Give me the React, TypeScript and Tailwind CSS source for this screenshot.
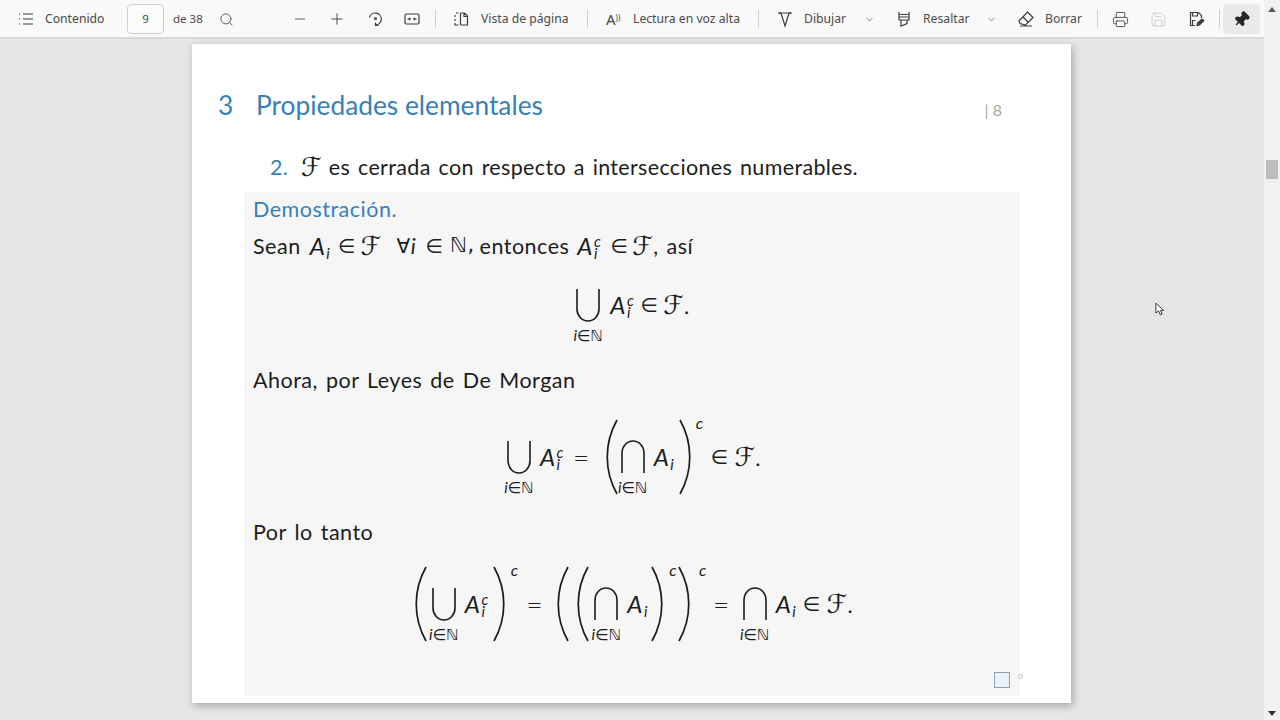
import { ChevronDown, Minus, Plus, Search, Printer, Save, Pin } from "lucide-react";
import type { ReactNode } from "react";

const mathFont = "font-['DejaVu_Sans',sans-serif]";

function Sep({ ml }: { ml: string }) {
  return <div className={`h-[18px] w-px bg-[#cfcfcf] shrink-0 ${ml}`} />;
}

function Glyph({ children, className = "" }: { children: ReactNode; className?: string }) {
  return (
    <svg viewBox="0 0 20 20" fill="none" stroke="#3d3d3d" strokeWidth="1.2" className={`w-5 h-5 shrink-0 ${className}`}>
      {children}
    </svg>
  );
}

function Toolbar() {
  return (
    <div className="h-[39px] shrink-0 flex items-center pt-px bg-[#f9f9f9] border-b-2 border-[#d8d8d8] text-[12.2px] text-[#4a4a4a] font-['Noto_Sans',sans-serif] whitespace-nowrap">
      <Glyph className="ml-[16px]">
        <path d="M3 5h1M3 10h1M3 15h1M7 5h10M7 10h10M7 15h10" />
      </Glyph>
      <span className="ml-[9px] w-[60px]">Contenido</span>
      <div className="ml-[22px] w-[37px] h-[30px] flex items-center justify-center bg-[#fbfbfb] border border-[#cfcfcf] rounded-sm text-[11.5px]">9</div>
      <span className="ml-[9px] w-[29px] text-[11.5px]">de 38</span>
      <Search size={15} strokeWidth={1.4} className="ml-[17px] shrink-0" />
      <Minus size={16} strokeWidth={1.3} className="ml-[58px] shrink-0" />
      <Plus size={18} strokeWidth={1.3} className="ml-[20px] shrink-0" />
      <Glyph className="ml-[19px]">
        <path d="M4.5 8.5a6 6 0 1 1 6 7.5M10.5 13.5v3h3" />
        <circle cx="10.5" cy="9.5" r="1" />
      </Glyph>
      <Glyph className="ml-[17px]">
        <rect x="3" y="5" width="14" height="10" rx="1.5" />
        <path d="M5.5 10h2M12.5 10h2M7 8.8 8.2 10 7 11.2M13 8.8 11.8 10l1.2 1.2" />
      </Glyph>
      <Sep ml="ml-[13px]" />
      <Glyph className="ml-[15px]">
        <path d="M7.5 4H5M4 6v2M4 10v2M4 14v2h3.5M9.500 4v12M9.500 4h4l3 3v9h-7M13 4v3.500h3.500" />
      </Glyph>
      <span className="ml-[10px] w-[90px]">Vista de página</span>
      <Sep ml="ml-[16px]" />
      <span className="ml-[18px] w-[20px] text-[15px] leading-none">A<sup className="text-[8px]">))</sup></span>
      <span className="ml-[7px] w-[109px]">Lectura en voz alta</span>
      <Sep ml="ml-[16px]" />
      <Glyph className="ml-[16px]">
        <path d="M3 4h14M6 4l4 13 4-13M5 3v2M15 3v2" />
      </Glyph>
      <span className="ml-[9px] w-[42px]">Dibujar</span>
      <ChevronDown size={11} strokeWidth={1.4} className="ml-[18px] shrink-0" />
      <Glyph className="ml-[19px]">
        <path d="M5 3v5h10V3M5 8v3h10V8M7 11v6l6-2.500V11M5 5.500h10" />
      </Glyph>
      <span className="ml-[9px] w-[46px]">Resaltar</span>
      <ChevronDown size={11} strokeWidth={1.4} className="ml-[17px] shrink-0" />
      <Glyph className="ml-[19px]">
        <path d="M11.500 3 17 8.500 9.500 16 4 14.500 3 12ZM7 8l5.500 5.500M4 17h12" />
      </Glyph>
      <span className="ml-[9px] w-[37px]">Borrar</span>
      <Sep ml="ml-[15px]" />
      <Printer size={17} strokeWidth={1.3} className="ml-[14px] shrink-0" />
      <Save size={17} strokeWidth={1.2} className="ml-[21px] shrink-0 text-[#c4c4c4]" />
      <Glyph className="ml-[19px]">
        <path d="M9 16.500H4.500v-13h8l3 3V9M6.500 3.500V7h5V3.500M6.500 16v-4.500h3" />
        <path d="m11 16.500.5-2.500 4.500-4 1.800 1.800-4.300 4.200Z" fill="#3d3d3d" />
      </Glyph>
      <Sep ml="ml-[13px]" />
      <div className="ml-[3px] w-[37px] h-[30px] bg-[#e9e9e9] rounded-sm flex items-center justify-center">
        <Pin size={17} className="rotate-45 fill-[#262626] text-[#262626]" />
      </div>
    </div>
  );
}

function Scrollbar() {
  return (
    <div className="w-4 shrink-0 h-full bg-[#f1f1f1] flex flex-col items-center">
      <div className="mt-[7px] w-0 h-0 border-x-[4px] border-x-transparent border-b-[5px] border-b-[#555]" />
      <div className="mt-[148px] w-3 h-[19px] bg-[#bcbcbc]" />
      <div className="mt-auto mb-[4px] w-0 h-0 border-x-[4px] border-x-transparent border-t-[5px] border-t-[#333]" />
    </div>
  );
}

function F({ className = "" }: { className?: string }) {
  return <span className={`${mathFont} italic text-[26px] leading-none ${className}`}>ℱ</span>;
}

function In({ className = "" }: { className?: string }) {
  return <span className={`${mathFont} text-[20px] ${className}`}>∈</span>;
}

function Eq({ className = "" }: { className?: string }) {
  return <span className={`font-light text-[28px] leading-none ${className}`}>=</span>;
}

// A with the sub index and an optional c stacked next to it
function Ai({ c, className = "" }: { c?: boolean; className?: string }) {
  return (
    <span className={`inline-flex items-center italic text-[24px] leading-none ${className}`}>
      <span>A</span>
      <span className="flex flex-col items-start text-[15px] leading-[12px] ml-px mt-[2px]">
        <span className={c ? "" : "invisible"}>c</span>
        <span>i</span>
      </span>
    </span>
  );
}

function BigOp({ kind, className = "" }: { kind: "u" | "n"; className?: string }) {
  return (
    <div className={`h-[76px] w-[28px] flex flex-col items-center shrink-0 ${className}`}>
      <div className="h-[21px]" />
      <svg viewBox="0 0 26 34" fill="none" stroke="#1c1c1c" strokeWidth="1.6" className="w-[26px] h-[34px]">
        {kind === "u" ? <path d="M2 1v20a11 12 0 0 0 22 0V1" /> : <path d="M2 33V13a11 12 0 0 1 22 0v20" />}
      </svg>
      <span className="h-[21px] text-[15.5px] leading-[26px] tracking-normal whitespace-nowrap">
        <span className="italic">i</span>
        <span className={mathFont}>∈ℕ</span>
      </span>
    </div>
  );
}

function Paren({ right, className = "" }: { right?: boolean; className?: string }) {
  return (
    <svg viewBox="0 0 14 76" fill="none" stroke="#1c1c1c" strokeWidth="1.7" className={`w-[14px] h-[76px] shrink-0 ${className}`}>
      {right ? <path d="M2 1C15 24 15 52 2 75" /> : <path d="M12 1C-1 24-1 52 12 75" />}
    </svg>
  );
}

function Power({ className = "" }: { className?: string }) {
  return <span className={`self-start italic text-[16px] leading-[16px] mt-[-4px] ${className}`}>c</span>;
}

function Formula({ children, className = "" }: { children: ReactNode; className?: string }) {
  return <div className={`h-[76px] flex items-center justify-center text-[22px] ${className}`}>{children}</div>;
}

export default function App() {
  return (
    <div className="w-[1280px] h-[720px] overflow-hidden flex bg-[#e6e6e6] relative">
      <div className="flex-1 flex flex-col min-w-0">
        <Toolbar />
        <div className="flex-1 flex justify-center items-start pt-[5px] pr-px">
          <div className="w-[879px] h-[659px] bg-white shadow-[2px_3px_8px_rgba(0,0,0,0.28)] flex flex-col pt-[42px] relative font-['Lato',sans-serif] text-[#1c1c1c]">
            <div className="h-10 flex items-center pl-[26px] pr-[69px] text-[#3680b8] text-[26.3px]">
              <span className="w-[38px]">3</span>
              <span>Propiedades elementales</span>
              <span className="ml-auto text-[16px] text-[#a8a8a8] mt-2">|&nbsp;8</span>
            </div>
            <div className="h-[34px] mt-[24px] ml-[78px] flex items-center text-[21.5px] tracking-[0.34px] [word-spacing:2px]">
              <span className="w-[31px] text-[#3680b8]">2.</span>
              <F />
              <span className="ml-[7px]">es cerrada con respecto a intersecciones numerables.</span>
            </div>
            <div className="mt-[8px] mr-[51px] ml-[52px] h-[504px] bg-[#f6f6f7] flex flex-col px-[9px] pb-[8px] text-[21.5px] tracking-[0.5px] [word-spacing:2px]">
              <div className="h-[34px] flex items-center text-[#3680b8]">Demostración.</div>
              <div className="h-[34px] mt-[3px] flex items-center">
                <span>Sean</span>
                <Ai className="ml-[9px]" />
                <In className="ml-[4px]" />
                <F className="ml-[5px]" />
                <span className={`${mathFont} text-[20px] ml-[15px]`}>∀</span>
                <span className="italic">i</span>
                <In className="ml-[9px]" />
                <span className={`${mathFont} text-[21px] ml-[7px]`}>ℕ,</span>
                <span className="ml-[5px]">entonces</span>
                <Ai c className="ml-[8px]" />
                <In className="ml-[9px]" />
                <F className="ml-[4px]" />
                <span>, así</span>
              </div>
              <Formula className="mt-[4px]">
                <BigOp kind="u" />
                <Ai c className="ml-[8px]" />
                <In className="ml-[6px]" />
                <F className="ml-[5px]" />
                <span>.</span>
              </Formula>
              <div className="h-[34px] mt-[20px] flex items-center">Ahora, por Leyes de De Morgan</div>
              <Formula className="mt-[22px] pl-[2px]">
                <BigOp kind="u" />
                <Ai c className="ml-[7px]" />
                <Eq className="ml-[9px]" />
                <Paren className="ml-[15px]" />
                <BigOp kind="n" />
                <Ai className="ml-[7px]" />
                <Paren right />
                <Power className="ml-[4px]" />
                <In className="ml-[7px]" />
                <F className="ml-[6px]" />
                <span>.</span>
              </Formula>
              <div className="h-[34px] mt-[20px] flex items-center">Por lo tanto</div>
              <Formula className="mt-[17px] pl-[3px]">
                <Paren />
                <BigOp kind="u" className="ml-[2px]" />
                <Ai c className="ml-[7px]" />
                <Paren right className="ml-[3px]" />
                <Power className="ml-[5px]" />
                <Eq className="ml-[8px]" />
                <Paren className="ml-[13px]" />
                <Paren className="ml-[6px]" />
                <BigOp kind="n" className="ml-[2px]" />
                <Ai className="ml-[7px]" />
                <Paren right className="-ml-px" />
                <Power className="ml-[5px]" />
                <Paren right />
                <Power className="ml-[8px]" />
                <Eq className="ml-[6px]" />
                <BigOp kind="n" className="ml-[11px]" />
                <Ai className="ml-[7px]" />
                <In className="ml-[3px]" />
                <F className="ml-[6px]" />
                <span>.</span>
              </Formula>
              <div className="mt-auto flex justify-end pr-[1px]">
                <div className="w-[16px] h-[16px] bg-[#eaf1f9] border border-[#8aa3b8]" />
              </div>
            </div>
            <div className="absolute left-[826px] top-[630px] w-[5px] h-[5px] rounded-full border border-[#c4c4c4]" />
          </div>
        </div>
      </div>
      <Scrollbar />
      <svg viewBox="0 0 10 16" className="absolute left-[1155px] top-[302px] w-[9px] h-[15px]" fill="#fff" stroke="#222" strokeWidth="1">
        <path d="M1 1v11l3-2.500 2 4.500 2-1-2-4h3.500Z" />
      </svg>
    </div>
  );
}
